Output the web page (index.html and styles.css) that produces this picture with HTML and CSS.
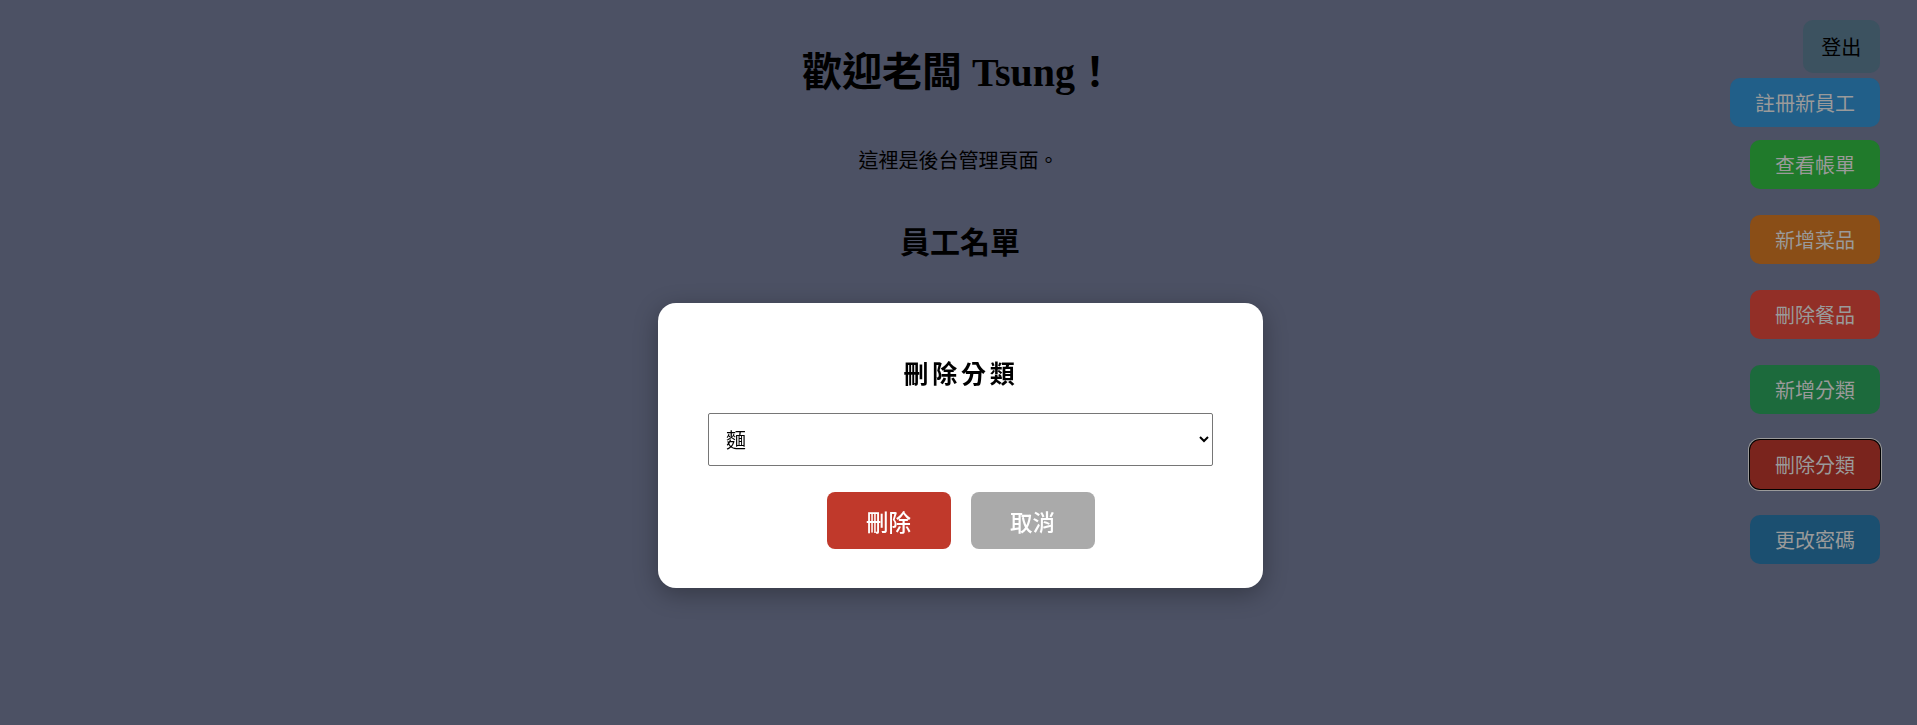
FILE: index.html
```html
<!DOCTYPE html>
<html lang="zh-Hant">
<head>
<meta charset="utf-8">
<title>後台管理</title>
<link rel="stylesheet" href="styles.css">
</head>
<body>
<div class="page">
  <main class="main">
    <h1 class="title">歡迎老闆 Tsung！</h1>
    <p class="subtitle">這裡是後台管理頁面。</p>
    <h2 class="section">員工名單</h2>
  </main>
  <nav class="sidebar">
    <button class="side-btn logout">登出</button>
    <button class="side-btn btn-register">註冊新員工</button>
    <button class="side-btn btn-bill">查看帳單</button>
    <button class="side-btn btn-add-dish">新增菜品</button>
    <button class="side-btn btn-del-dish">刪除餐品</button>
    <button class="side-btn btn-add-cat">新增分類</button>
    <button class="side-btn btn-del-cat">刪除分類</button>
    <button class="side-btn btn-pwd">更改密碼</button>
  </nav>
</div>
<div class="overlay">
  <div class="modal">
    <h3 class="modal-title">刪除分類</h3>
    <select class="modal-select">
      <option>麵</option>
      <option>飯</option>
      <option>湯</option>
    </select>
    <div class="modal-actions">
      <button class="modal-btn btn-delete">刪除</button>
      <button class="modal-btn btn-cancel">取消</button>
    </div>
  </div>
</div>
</body>
</html>
```

FILE: styles.css
```css
html, body {
  margin: 0;
  padding: 0;
}

body {
  background: #4c5164;
  color: #000;
  font-family: "Noto Sans CJK TC", sans-serif;
  height: 725px;
  overflow: hidden;
}

.page {
  display: grid;
  grid-template-columns: 1fr;
}

.main,
.sidebar {
  grid-area: 1 / 1;
}

.main {
  text-align: center;
  padding-top: 50px;
}

.title {
  margin: 0;
  font-family: "Liberation Serif", "Noto Sans CJK TC", serif;
  font-size: 40px;
  font-weight: bold;
  line-height: 46px;
}

.subtitle {
  margin: 50px 0 0;
  font-size: 20px;
  line-height: 28px;
}

.section {
  margin: 48px 0 0 3px;
  font-size: 30px;
  font-weight: bold;
  line-height: 36px;
}

.sidebar {
  justify-self: end;
  align-self: start;
  display: flex;
  flex-direction: column;
  align-items: flex-end;
  margin: 20px 37px 0 0;
}

.side-btn {
  font-family: "Noto Sans CJK TC", sans-serif;
  font-size: 20px;
  line-height: 49px;
  height: 49px;
  padding: 0 25px;
  border: none;
  border-radius: 10px;
  color: #9a9a9a;
  margin-top: 26px;
  cursor: pointer;
}

.logout {
  background: #3c5260;
  color: #000;
  height: 53px;
  line-height: 53px;
  padding: 0 18.75px;
  margin-top: 0;
}

.btn-register {
  background: #215f89;
  margin-top: 5px;
}

.btn-bill {
  background: #207a2b;
  margin-top: 13px;
}

.btn-add-dish {
  background: #8a4e17;
}

.btn-del-dish {
  background: #922f27;
}

.btn-add-cat {
  background: #1c6a3c;
}

.btn-del-cat {
  background: #7a241d;
  box-shadow: 0 0 0 1px #000, 0 0 0 2px #9a9a9a;
}

.btn-pwd {
  background: #1b4f70;
}

.overlay {
  position: fixed;
  inset: 0;
  display: flex;
  justify-content: center;
  align-items: flex-start;
  padding: 303px 0 0 4px;
  box-sizing: border-box;
}

.modal {
  width: 605px;
  height: 285px;
  box-sizing: border-box;
  background: #fff;
  border-radius: 18px;
  padding: 53px 50px 0;
  box-shadow: 0 6px 24px rgba(0, 0, 0, 0.3);
  display: flex;
  flex-direction: column;
  align-items: stretch;
}

.modal-title {
  margin: 0;
  text-align: center;
  font-size: 25px;
  font-weight: bold;
  line-height: 32px;
  letter-spacing: 3.8px;
  padding-left: 1px;
}

.modal-select {
  margin-top: 25px;
  height: 53px;
  width: 100%;
  box-sizing: border-box;
  font-family: "Noto Sans CJK TC", sans-serif;
  font-size: 20px;
  padding: 0 8px 0 13px;
  border: 1px solid #767676;
  border-radius: 2px;
  background: #fff;
  color: #000;
}

.modal-actions {
  margin-top: 26px;
  display: flex;
  justify-content: center;
  gap: 20px;
}

.modal-btn {
  width: 124px;
  height: 57px;
  border: none;
  border-radius: 8px;
  color: #fff;
  font-family: "Noto Sans CJK TC", sans-serif;
  font-size: 22.5px;
  font-weight: 500;
  cursor: pointer;
}

.btn-delete {
  background: #c0392b;
}

.btn-cancel {
  background: #aaaaaa;
}
```
